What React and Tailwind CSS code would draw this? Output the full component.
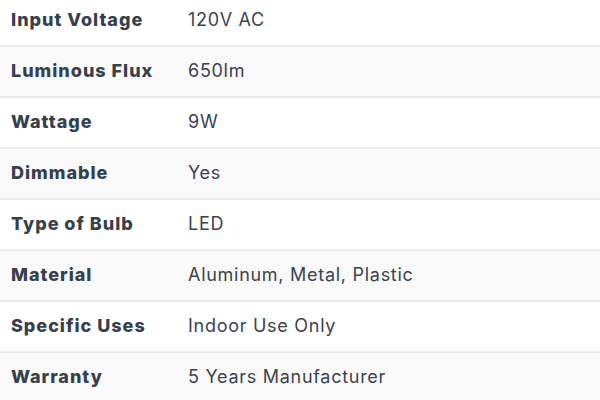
const specs = [
  ["Input Voltage", "120V AC"],
  ["Luminous Flux", "650lm"],
  ["Wattage", "9W"],
  ["Dimmable", "Yes"],
  ["Type of Bulb", "LED"],
  ["Material", "Aluminum, Metal, Plastic"],
  ["Specific Uses", "Indoor Use Only"],
  ["Warranty", "5 Years Manufacturer"],
];

export default function App() {
  return (
    <div className="h-[400px] w-[600px] overflow-hidden bg-white font-['Inter',sans-serif]">
      <table className="-mt-[5px] w-full border-collapse">
        <tbody>
          {specs.map(([label, value], i) => (
            <tr
              key={label}
              className={`h-[51px] border-b-2 border-[#ebebeb] ${i % 2 === 1 ? "bg-[#f9f9f9]" : "bg-white"}`}
            >
              <th className="w-[188px] pb-[2px] pl-[11px] text-left text-[18px] font-extrabold tracking-[0.055em] text-[#363f4d]">
                {label}
              </th>
              <td className="pb-[2px] text-[18px] tracking-[0.04em] text-[#3a4350]">{value}</td>
            </tr>
          ))}
        </tbody>
      </table>
    </div>
  );
}
